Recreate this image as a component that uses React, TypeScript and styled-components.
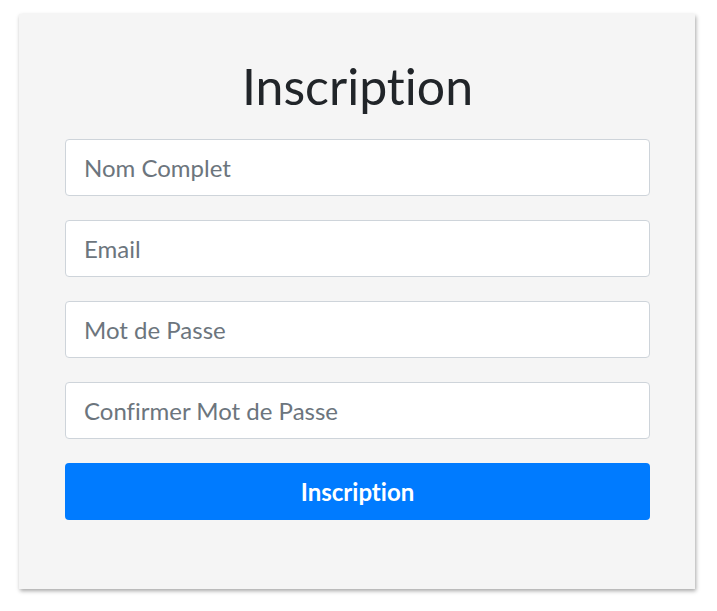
import React, { useState } from 'react';
import styled, { createGlobalStyle } from 'styled-components';

const GlobalStyle = createGlobalStyle`
    html, body {
        margin: 0;
        padding: 0;
        background: #ffffff;
        font-family: Lato, "Noto Sans", sans-serif;
        font-variant-ligatures: none;
    }
`;

const Page = styled.div`
    display: flex;
    justify-content: flex-start;
    align-items: flex-start;
    min-height: 100vh;
    box-sizing: border-box;
    padding: 14px 0 0 19px;
`;

const Card = styled.form`
    width: 676px;
    box-sizing: border-box;
    background-color: #f5f5f5;
    box-shadow: 1px 2px 4px rgba(0, 0, 0, 0.35);
    padding: 38px 45px 69px 46px;
    display: flex;
    flex-direction: column;
    gap: 24px;
`;

const Title = styled.h1`
    margin: 2px 0 -3px;
    text-align: center;
    font-size: 50px;
    font-weight: 400;
    line-height: 64px;
    color: #212529;
    font-variant-ligatures: none;
`;

const Input = styled.input`
    height: 57px;
    box-sizing: border-box;
    width: 100%;
    padding: 0 18px;
    border: 1px solid #ced4da;
    border-radius: 4px;
    background-color: #ffffff;
    font-family: Lato, "Noto Sans", sans-serif;
    font-size: 24px;
    font-variant-ligatures: none;
    color: #495057;
    outline: none;

    &::placeholder {
        color: #6c757d;
    }
`;

const SubmitButton = styled.button`
    height: 57px;
    width: 100%;
    border: 0;
    border-radius: 4px;
    background-color: #007bff;
    color: #ffffff;
    font-family: Lato, "Noto Sans", sans-serif;
    font-size: 24px;
    font-weight: 700;
    font-variant-ligatures: none;
    cursor: pointer;
`;

const fields = ["Nom Complet", "Email", "Mot de Passe", "Confirmer Mot de Passe"];

const App = () => {
    const [values, setValues] = useState<string[]>(["", "", "", ""]);

    const onChangeHandler = (index: number) => (e: React.ChangeEvent<HTMLInputElement>) => {
        const next = [...values];
        next[index] = e.target.value;
        setValues(next);
    }

    return (
        <Page>
            <GlobalStyle />
            <Card onSubmit={(e) => e.preventDefault()}>
                <Title>Inscription</Title>
                {fields.map((field, i) => (
                    <Input
                        key={field}
                        type={i >= 2 ? "password" : i === 1 ? "email" : "text"}
                        placeholder={field}
                        value={values[i]}
                        onChange={onChangeHandler(i)}
                    />
                ))}
                <SubmitButton type="submit">Inscription</SubmitButton>
            </Card>
        </Page>
    );
}

export default App;
